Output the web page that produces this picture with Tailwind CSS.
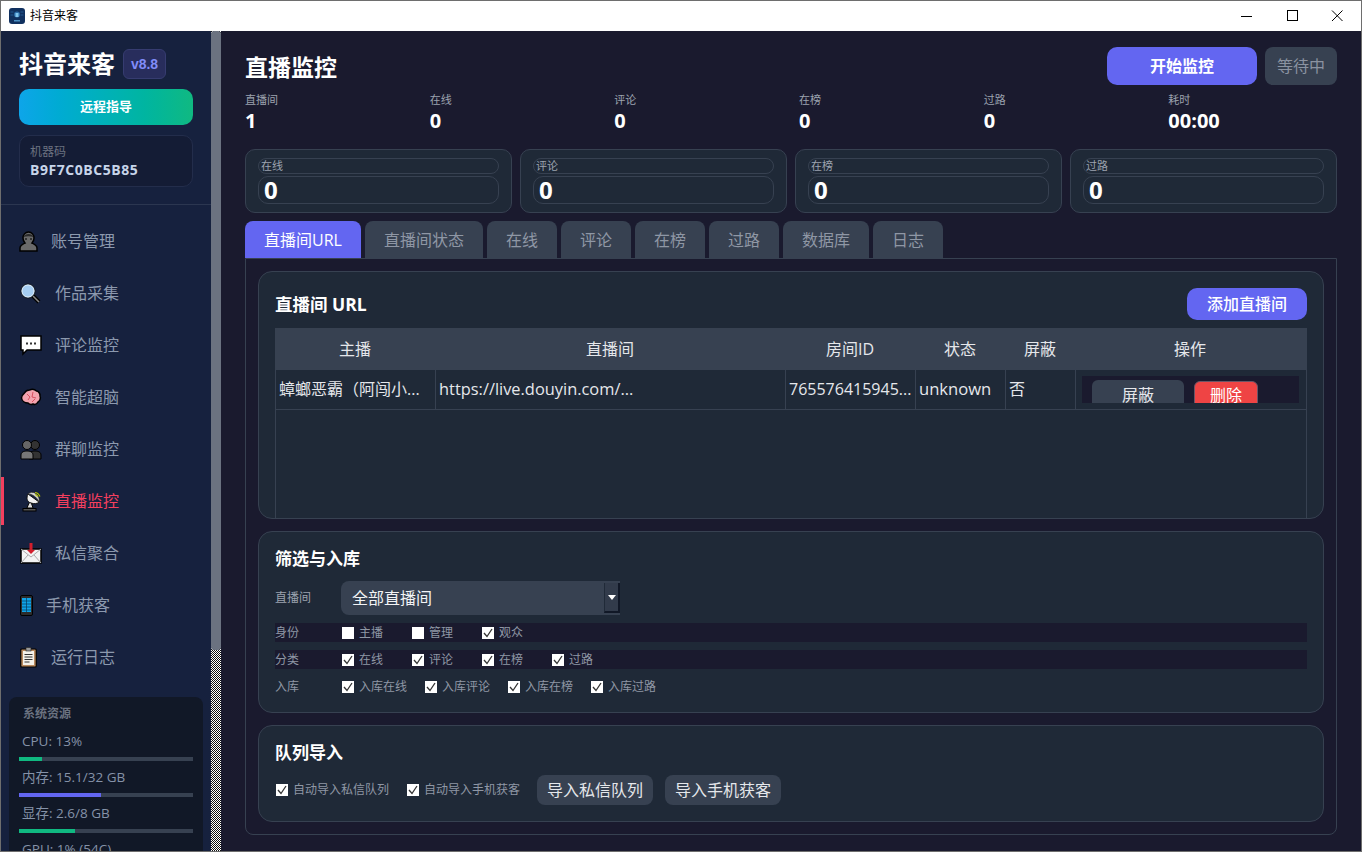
<!DOCTYPE html>
<html lang="zh">
<head>
<meta charset="utf-8">
<title>抖音来客</title>
<script src="https://cdn.jsdelivr.net/npm/@tailwindcss/browser@4"></script>
</head>
<body class="bg-[#1a1a2e]">
<div class="w-[1362px] h-[852px] overflow-hidden flex flex-col border border-[#6e6e6e] font-['Open_Sans','Noto_Sans_CJK_SC',sans-serif] text-white">
  <!-- title bar -->
  <div class="h-[30px] shrink-0 bg-white flex items-center text-black">
    <svg class="ml-2 w-4 h-4" viewBox="0 0 16 16"><rect width="16" height="16" rx="3" fill="#10305f"/><circle cx="8" cy="6.5" r="3" fill="#2b6ca8"/><rect x="6.5" y="5" width="3" height="4" fill="#7fc4ee"/><rect x="5" y="12" width="6" height="1.5" fill="#4a8fc4"/><path d="M1.5 4h3M1.5 7h3M11.5 4h3M11.5 7h3" stroke="#2b6ca8" stroke-width=".7"/></svg>
    <span class="ml-[5px] text-xs">抖音来客</span>
    <div class="ml-auto flex items-center h-full">
      <svg class="w-[46px] h-[30px]" viewBox="0 0 46 30"><path d="M18 15.500h11" stroke="#000"/></svg>
      <svg class="w-[46px] h-[30px]" viewBox="0 0 46 30"><rect x="18.500" y="9.500" width="10" height="10" fill="none" stroke="#000"/></svg>
      <svg class="w-[46px] h-[30px]" viewBox="0 0 46 30"><path d="M17 9.500l10.500 10.500M27.500 9.500L17 20" stroke="#000"/></svg>
    </div>
  </div>
  <div class="flex-1 min-h-0 flex">
    <!-- sidebar -->
    <aside class="w-[210px] shrink-0 bg-[#16213e] overflow-hidden flex flex-col">
      <div class="h-[174px] shrink-0 border-b border-[#2b3650] px-[18px] pt-[18px]">
        <div class="flex items-center gap-2 h-[30px]">
          <span class="text-2xl font-bold leading-none">抖音来客</span>
          <span class="w-[43px] h-[30px] rounded-md border border-[#363c70] bg-[#282d5c] text-[#818cf8] text-sm font-bold flex items-center justify-center font-['Liberation_Sans',sans-serif]">v8.8</span>
        </div>
        <button class="mt-[10px] w-[174px] h-9 rounded-[10px] bg-gradient-to-r from-[#0ea5e9] to-[#10b981] text-[13px] font-bold text-white">远程指导</button>
        <div class="mt-[10px] w-[174px] h-[52px] rounded-[10px] border border-[#232d4b] bg-[#141c35] px-[10px] pt-2">
          <div class="text-xs leading-4 text-[#6b7280]">机器码</div>
          <div class="mt-px text-sm tracking-[0.55px] leading-[18px] font-bold text-[#c7d5ea]">B9F7C0BC5B85</div>
        </div>
      </div>
      <nav class="shrink-0 pt-[12px] flex flex-col gap-1 text-base text-[#8c99ae]">
        <a class="h-12 flex items-center pl-[18px] gap-[13px]">
          <svg class="w-[19px] h-[21px]" viewBox="0 0 19 21"><path d="M1 20v-3c0-3 3-4 5-5-1-1-2-3-2-5 0-3 2-6 5.500-6S15 4 15 7c0 2-1 4-2 5 2 1 5 2 5 5v3z" fill="#6a6a6a" stroke="#000" stroke-width="1.500"/><path d="M4.500 6c1-4 9-4 10 0-3-1-7-1-10 0z" fill="#2a2a2a"/><circle cx="7" cy="8" r="1" fill="#222"/><circle cx="12" cy="8" r="1" fill="#222"/></svg>
          <span>账号管理</span>
        </a>
        <a class="h-12 flex items-center pl-[19px] gap-[13px]">
          <svg class="w-[22px] h-[21px]" viewBox="0 0 22 21"><path d="M12 12l7 7" stroke="#000" stroke-width="4"/><path d="M13 13l6 6" stroke="#888" stroke-width="1.500"/><circle cx="8" cy="8" r="7" fill="#a5cdf2" stroke="#111" stroke-width="1"/><circle cx="8" cy="8" r="6" fill="none" stroke="#dceaf7" stroke-width="1"/></svg>
          <span>作品采集</span>
        </a>
        <a class="h-12 flex items-center pl-[19px] gap-[13px]">
          <svg class="w-[22px] h-[21px]" viewBox="0 0 22 21"><path d="M1 1h20v14H7l-4 4v-4H1z" fill="#fff" stroke="#000" stroke-width="1.500"/><path d="M6 7.500h2v2H6zM10 7.500h2v2h-2zM14 7.500h2v2h-2z" fill="#333"/></svg>
          <span>评论监控</span>
        </a>
        <a class="h-12 flex items-center pl-[19px] gap-[13px]">
          <svg class="w-[22px] h-[21px]" viewBox="0 0 22 21"><path d="M1.500 11c0-3 2-4 3-5 1-2 3-3 5-3 2-1 5-1 7 1 2 0 4 3 3.500 5 1 2 0 5-2 6-1 2-3 3-5 2-2 1-4 0-5-1-3 0-6-2-6.500-5z" fill="#f4a3ae" stroke="#000" stroke-width="1.500"/><path d="M7 7l3 3-2 3M13 5l-1 5 4 1M12 15l3-3" stroke="#d8505f" fill="none"/></svg>
          <span>智能超脑</span>
        </a>
        <a class="h-12 flex items-center pl-[19px] gap-[13px]">
          <svg class="w-[22px] h-[21px]" viewBox="0 0 22 21"><circle cx="15" cy="6" r="4.500" fill="#333" stroke="#000"/><path d="M9 20v-4c0-3 3-4 6-4s6 1 6 4v4z" fill="#333" stroke="#000"/><circle cx="7" cy="6" r="4.500" fill="#666" stroke="#000"/><path d="M1 20v-4c0-3 3-4 6-4s6 1 6 4v4z" fill="#777" stroke="#000"/></svg>
          <span>群聊监控</span>
        </a>
        <a class="h-12 flex items-center border-l-[3px] border-[#f43f5e] pl-[18px] gap-[13px] text-[#f43f5e]">
          <svg class="w-[20px] h-[21px]" viewBox="0 0 20 21"><path d="M7 12L5 17h6l-2-6z" fill="#dedede" stroke="#000"/><path d="M6 3c-2 4-1 8 3 9 3 1 6 1 8-1z" fill="#f0f0f0" stroke="#111"/><path d="M6 3c4 0 9 3 11 8 1-4-1-7-4-9-2-1-5-1-7 1z" fill="#d4d4d4" stroke="#222" stroke-width=".7"/><path d="M13 1.500c2 0 4 2 5 4M13 3.500c1 0 2 1 3 2" stroke="#b5c400" fill="none" stroke-width="1.200"/><rect x="1" y="17.500" width="13" height="2.500" fill="#555" stroke="#000"/></svg>
          <span>直播监控</span>
        </a>
        <a class="h-12 flex items-center pl-[19px] gap-[13px]">
          <svg class="w-[22px] h-[21px]" viewBox="0 0 22 21"><rect x="1" y="6" width="20" height="14" fill="#f3f3f3" stroke="#000" stroke-width="1.500"/><path d="M1 6l10 8 10-8M1 20l7-8M21 20l-7-8" fill="none" stroke="#aaa"/><path d="M9.500 0h3v7h2.500L11 11 7 7h2.500z" fill="#d21e2c"/></svg>
          <span>私信聚合</span>
        </a>
        <a class="h-12 flex items-center pl-[19px] gap-[13px]">
          <svg class="w-[13px] h-[21px]" viewBox="0 0 13 21"><rect x=".5" y=".5" width="12" height="20" rx="1.500" fill="#2c2c2c" stroke="#000"/><rect x="2" y="3" width="9" height="14" fill="#0fa4e8"/><path d="M2 6h9M2 9h9M2 12h9M2 15h9M6.500 3v14" stroke="#07395a" stroke-width=".7"/></svg>
          <span>手机获客</span>
        </a>
        <a class="h-12 flex items-center pl-[19px] gap-[14px]">
          <svg class="w-[17px] h-[21px]" viewBox="0 0 17 21"><rect x=".75" y="2" width="15.500" height="18" rx="1" fill="#b98a5e" stroke="#000" stroke-width="1.200"/><rect x="3" y="4" width="11" height="14" fill="#f5f2ea"/><rect x="6" y=".5" width="5" height="3.500" fill="#999" stroke="#222" stroke-width=".6"/><path d="M4.500 7.500h8M4.500 10h8M4.500 12.500h8M4.500 15h5" stroke="#333" stroke-width="1"/></svg>
          <span>运行日志</span>
        </a>
      </nav>
      <div class="mt-[16px] mx-2 flex-1 min-h-[155px] rounded-t-lg bg-[#111827] px-[10px] pt-[9px] text-[13.5px] text-[#8592a8]">
        <div class="text-xs leading-[16px] font-bold text-[#6b7280] pl-[4px]">系统资源</div>
        <div class="mt-[9px] leading-[20px] pl-[3px] h-[20px]">CPU: 13%</div>
        <div class="mt-[6px] h-1 bg-[#374151]"><div class="h-full bg-[#10b981]" style="width:13%"></div></div>
        <div class="mt-[6px] leading-[20px] pl-[3px] h-[20px]">内存: 15.1/32 GB</div>
        <div class="mt-[6px] h-1 bg-[#374151]"><div class="h-full bg-[#6366f1]" style="width:47%"></div></div>
        <div class="mt-[6px] leading-[20px] pl-[3px] h-[20px]">显存: 2.6/8 GB</div>
        <div class="mt-[6px] h-1 bg-[#374151]"><div class="h-full bg-[#10b981]" style="width:32%"></div></div>
        <div class="mt-[6px] leading-[20px] pl-[3px] h-[20px]">GPU: 1% (54C)</div>
      </div>
    </aside>
    <!-- sidebar scrollbar -->
    <div class="w-[10px] shrink-0 flex flex-col bg-[repeating-conic-gradient(#ffffff_0_25%,#111111_0_50%)] bg-[length:2px_2px]">
      <div class="h-[619px] rounded-[3px] bg-[#6b7280]"></div>
    </div>
    <!-- main -->
    <main class="flex-1 min-w-0 overflow-hidden px-6 pt-4 bg-[#1a1a2e]">
      <div class="flex items-center justify-between h-[38px]">
        <h1 class="text-[23px] font-bold leading-none mt-[2px]">直播监控</h1>
        <div class="flex gap-2">
          <button class="w-[150px] h-[38px] rounded-[10px] bg-[#6366f1] text-base font-bold text-white">开始监控</button>
          <button class="w-[72px] h-[38px] rounded-lg bg-[#374151] text-base text-[#8b93a1]">等待中</button>
        </div>
      </div>
      <div class="mt-[7px] grid grid-cols-6 gap-4 h-[42px]">
        <div><div class="text-[11px] leading-[16px] text-[#9ca3af]">直播间</div><div class="mt-px text-xl leading-[24px] font-bold">1</div></div>
        <div><div class="text-[11px] leading-[16px] text-[#9ca3af]">在线</div><div class="mt-px text-xl leading-[24px] font-bold">0</div></div>
        <div><div class="text-[11px] leading-[16px] text-[#9ca3af]">评论</div><div class="mt-px text-xl leading-[24px] font-bold">0</div></div>
        <div><div class="text-[11px] leading-[16px] text-[#9ca3af]">在榜</div><div class="mt-px text-xl leading-[24px] font-bold">0</div></div>
        <div><div class="text-[11px] leading-[16px] text-[#9ca3af]">过路</div><div class="mt-px text-xl leading-[24px] font-bold">0</div></div>
        <div><div class="text-[11px] leading-[16px] text-[#9ca3af]">耗时</div><div class="mt-px text-xl leading-[24px] font-bold">00:00</div></div>
      </div>
      <div class="mt-[15px] grid grid-cols-4 gap-2">
        <div class="h-[64px] rounded-[10px] border border-[#374151] bg-[#1f2937] px-3 pt-2">
          <div class="h-4 rounded-full border border-[#374151] text-[11px] leading-[14px] text-[#9ca3af] pl-[2px]">在线</div>
          <div class="mt-[2px] h-[28px] rounded-[10px] border border-[#374151] text-2xl leading-[26px] font-bold pl-[5px]">0</div>
        </div>
        <div class="h-[64px] rounded-[10px] border border-[#374151] bg-[#1f2937] px-3 pt-2">
          <div class="h-4 rounded-full border border-[#374151] text-[11px] leading-[14px] text-[#9ca3af] pl-[2px]">评论</div>
          <div class="mt-[2px] h-[28px] rounded-[10px] border border-[#374151] text-2xl leading-[26px] font-bold pl-[5px]">0</div>
        </div>
        <div class="h-[64px] rounded-[10px] border border-[#374151] bg-[#1f2937] px-3 pt-2">
          <div class="h-4 rounded-full border border-[#374151] text-[11px] leading-[14px] text-[#9ca3af] pl-[2px]">在榜</div>
          <div class="mt-[2px] h-[28px] rounded-[10px] border border-[#374151] text-2xl leading-[26px] font-bold pl-[5px]">0</div>
        </div>
        <div class="h-[64px] rounded-[10px] border border-[#374151] bg-[#1f2937] px-3 pt-2">
          <div class="h-4 rounded-full border border-[#374151] text-[11px] leading-[14px] text-[#9ca3af] pl-[2px]">过路</div>
          <div class="mt-[2px] h-[28px] rounded-[10px] border border-[#374151] text-2xl leading-[26px] font-bold pl-[5px]">0</div>
        </div>
      </div>
      <!-- tabs -->
      <div class="mt-2 flex gap-1 h-[37px] text-base text-[#8f97a5]">
        <div class="w-[116px] rounded-t-lg bg-[#6366f1] text-white flex items-center justify-center">直播间URL</div>
        <div class="w-[118px] rounded-t-lg bg-[#374151] flex items-center justify-center">直播间状态</div>
        <div class="w-[70px] rounded-t-lg bg-[#374151] flex items-center justify-center">在线</div>
        <div class="w-[70px] rounded-t-lg bg-[#374151] flex items-center justify-center">评论</div>
        <div class="w-[70px] rounded-t-lg bg-[#374151] flex items-center justify-center">在榜</div>
        <div class="w-[70px] rounded-t-lg bg-[#374151] flex items-center justify-center">过路</div>
        <div class="w-[86px] rounded-t-lg bg-[#374151] flex items-center justify-center">数据库</div>
        <div class="w-[70px] rounded-t-lg bg-[#374151] flex items-center justify-center">日志</div>
      </div>
      <!-- pane -->
      <div class="h-[577px] border border-[#374151] rounded-b-lg px-3 pt-3 flex flex-col gap-3">
        <section class="h-[248px] shrink-0 rounded-[14px] border border-[#374151] bg-[#1f2937] overflow-hidden flex flex-col px-4 pt-4">
          <div class="flex items-center justify-between h-8 shrink-0">
            <h2 class="text-[17.5px] font-bold pt-px">直播间 URL</h2>
            <button class="w-[120px] h-8 rounded-[10px] bg-[#6366f1] text-base font-medium text-white">添加直播间</button>
          </div>
          <div class="mt-2 flex-1 rounded-t-md border-x border-[#374151] text-base text-[#e5e7eb]">
            <div class="h-[42px] bg-[#374151] grid grid-cols-[160px_350px_130px_90px_70px_230px] items-center text-center -mx-px">
              <div>主播</div><div>直播间</div><div>房间ID</div><div>状态</div><div>屏蔽</div><div>操作</div>
            </div>
            <div class="h-[40px] border-b border-[#374151] grid grid-cols-[160px_350px_130px_90px_70px_230px] items-stretch">
              <div class="border-r border-[#374151] pl-[3px] pb-px flex items-center whitespace-nowrap overflow-hidden">蟑螂恶霸（阿闯小...</div>
              <div class="border-r border-[#374151] pl-[3px] pb-px flex items-center whitespace-nowrap text-[16.4px]">https://live.douyin.com/...</div>
              <div class="border-r border-[#374151] pl-[3px] pb-px flex items-center whitespace-nowrap">765576415945...</div>
              <div class="border-r border-[#374151] pl-[3px] pb-px flex items-center text-[16.6px]">unknown</div>
              <div class="border-r border-[#374151] pl-[3px] pb-px flex items-center">否</div>
              <div class="pl-[6px] pr-[6px] pt-[6px]">
                <div class="h-[27px] w-[217px] bg-[#1a1a2e] overflow-hidden flex gap-[10px] pl-[10px] pt-[4px]">
                  <div class="w-[92px] h-[32px] shrink-0 rounded-md bg-[#374151] text-center leading-[30px]">屏蔽</div>
                  <div class="mt-px w-[64px] h-[32px] shrink-0 rounded-md bg-[#ef4444] border border-[#6b5566] text-white text-center leading-[26px]">删除</div>
                </div>
              </div>
            </div>
          </div>
        </section>
        <section class="h-[182px] shrink-0 rounded-[14px] border border-[#374151] bg-[#1f2937] px-4 pt-[14px]">
          <h2 class="text-[17px] font-bold leading-[26px]">筛选与入库</h2>
          <div class="mt-[9px] flex items-center h-[34px]">
            <span class="w-[66px] text-xs text-[#9ca3af]">直播间</span>
            <div class="w-[279px] h-[34px] rounded-l-lg bg-[#374151] flex items-center pl-[11px] text-base text-[#f3f4f6]">
              <span class="flex-1">全部直播间</span>
              <span class="w-[16px] h-[30px] shrink-0 bg-[#323b4b] border-l border-b-2 border-r-2 border-l-[#202a38] border-b-[#111827] border-r-[#111827] flex items-center justify-center">
                <svg class="w-2 h-[5px]" viewBox="0 0 8 5"><path d="M0 0h8L4 5z" fill="#fff"/></svg>
              </span>
            </div>
          </div>
          <div class="mt-2 h-[19px] bg-[#1a1a2e] flex items-center text-xs text-[#8f97a5]">
            <span class="w-[67px]">身份</span>
            <label class="w-[70px] flex items-center gap-[5px]"><span class="w-3 h-3 bg-white"></span>主播</label>
            <label class="w-[70px] flex items-center gap-[5px]"><span class="w-3 h-3 bg-white"></span>管理</label>
            <label class="w-[70px] flex items-center gap-[5px]"><span class="w-3 h-3 bg-white flex"><svg viewBox="0 0 12 12"><path d="M2 6l3 3.500L10 2" fill="none" stroke="#333" stroke-width="1.300"/></svg></span>观众</label>
          </div>
          <div class="mt-2 h-[19px] bg-[#1a1a2e] flex items-center text-xs text-[#8f97a5]">
            <span class="w-[67px]">分类</span>
            <label class="w-[70px] flex items-center gap-[5px]"><span class="w-3 h-3 bg-white flex"><svg viewBox="0 0 12 12"><path d="M2 6l3 3.500L10 2" fill="none" stroke="#333" stroke-width="1.300"/></svg></span>在线</label>
            <label class="w-[70px] flex items-center gap-[5px]"><span class="w-3 h-3 bg-white flex"><svg viewBox="0 0 12 12"><path d="M2 6l3 3.500L10 2" fill="none" stroke="#333" stroke-width="1.300"/></svg></span>评论</label>
            <label class="w-[70px] flex items-center gap-[5px]"><span class="w-3 h-3 bg-white flex"><svg viewBox="0 0 12 12"><path d="M2 6l3 3.500L10 2" fill="none" stroke="#333" stroke-width="1.300"/></svg></span>在榜</label>
            <label class="w-[70px] flex items-center gap-[5px]"><span class="w-3 h-3 bg-white flex"><svg viewBox="0 0 12 12"><path d="M2 6l3 3.500L10 2" fill="none" stroke="#333" stroke-width="1.300"/></svg></span>过路</label>
          </div>
          <div class="mt-2 h-[19px] flex items-center text-xs text-[#8f97a5]">
            <span class="w-[67px]">入库</span>
            <label class="w-[83px] flex items-center gap-[5px]"><span class="w-3 h-3 bg-white flex"><svg viewBox="0 0 12 12"><path d="M2 6l3 3.500L10 2" fill="none" stroke="#333" stroke-width="1.300"/></svg></span>入库在线</label>
            <label class="w-[83px] flex items-center gap-[5px]"><span class="w-3 h-3 bg-white flex"><svg viewBox="0 0 12 12"><path d="M2 6l3 3.500L10 2" fill="none" stroke="#333" stroke-width="1.300"/></svg></span>入库评论</label>
            <label class="w-[83px] flex items-center gap-[5px]"><span class="w-3 h-3 bg-white flex"><svg viewBox="0 0 12 12"><path d="M2 6l3 3.500L10 2" fill="none" stroke="#333" stroke-width="1.300"/></svg></span>入库在榜</label>
            <label class="w-[83px] flex items-center gap-[5px]"><span class="w-3 h-3 bg-white flex"><svg viewBox="0 0 12 12"><path d="M2 6l3 3.500L10 2" fill="none" stroke="#333" stroke-width="1.300"/></svg></span>入库过路</label>
          </div>
        </section>
        <section class="h-[97px] shrink-0 rounded-[14px] border border-[#374151] bg-[#1f2937] px-4 pt-[14px]">
          <h2 class="text-[17px] font-bold leading-[26px]">队列导入</h2>
          <div class="mt-[9px] flex items-center h-[30px] text-xs text-[#8f97a5]">
            <label class="w-[132px] flex items-center gap-[5px] pl-px"><span class="w-3 h-3 bg-white flex"><svg viewBox="0 0 12 12"><path d="M2 6l3 3.500L10 2" fill="none" stroke="#333" stroke-width="1.300"/></svg></span>自动导入私信队列</label>
            <label class="w-[130px] flex items-center gap-[5px]"><span class="w-3 h-3 bg-white flex"><svg viewBox="0 0 12 12"><path d="M2 6l3 3.500L10 2" fill="none" stroke="#333" stroke-width="1.300"/></svg></span>自动导入手机获客</label>
            <button class="w-[116px] h-[30px] rounded-lg bg-[#374151] text-base text-[#e5e7eb]">导入私信队列</button>
            <button class="ml-3 w-[116px] h-[30px] rounded-lg bg-[#374151] text-base text-[#e5e7eb]">导入手机获客</button>
          </div>
        </section>
      </div>
    </main>
  </div>
</div>
</body>
</html>
